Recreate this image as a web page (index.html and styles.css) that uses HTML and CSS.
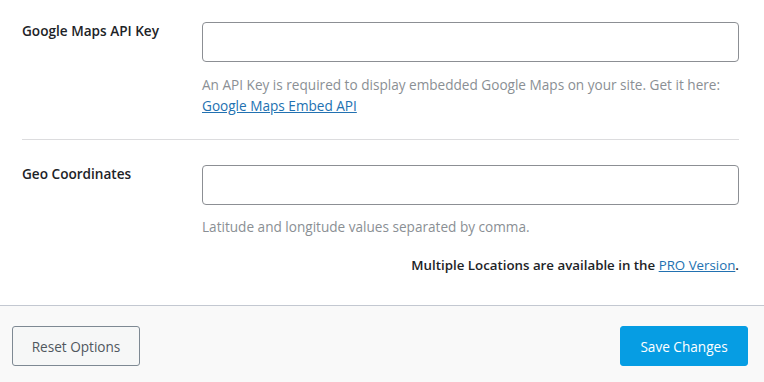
FILE: index.html
```html
<!DOCTYPE html>
<html lang="en">
<head>
<meta charset="utf-8">
<title>Settings</title>
<link rel="stylesheet" href="styles.css">
</head>
<body>
<div class="page">
  <div class="content">
    <div class="row row-first">
      <div class="label">Google Maps API Key</div>
      <div class="field">
        <input class="text-input" type="text">
        <p class="description">An API Key is required to display embedded Google Maps on your site. Get it here: <a href="#">Google Maps Embed API</a></p>
      </div>
    </div>
    <div class="row row-second">
      <div class="label">Geo Coordinates</div>
      <div class="field">
        <input class="text-input" type="text">
        <p class="description">Latitude and longitude values separated by comma.</p>
      </div>
    </div>
    <p class="pro-note">Multiple Locations are available in the <a href="#">PRO Version</a>.</p>
  </div>
  <div class="footer">
    <button class="btn btn-reset" type="button">Reset Options</button>
    <button class="btn btn-save" type="button">Save Changes</button>
  </div>
</div>
</body>
</html>
```
FILE: styles.css
```css
html, body {
  margin: 0;
  padding: 0;
  background: #ffffff;
}
body {
  font-family: "Open Sans", "Noto Sans", sans-serif;
  font-size: 13.6px;
  color: #1d2327;
  width: 764px;
  height: 382px;
  overflow: hidden;
}
.page {
  display: flex;
  flex-direction: column;
}
.content {
  padding: 0 25px 0 22px;
}
.row {
  display: flex;
}
.row-first {
  padding: 22px 0 23px;
  border-bottom: 1px solid #dcdcde;
}
.row-second {
  padding: 25px 0 0;
}
.label {
  width: 180px;
  flex: none;
  font-weight: 600;
  font-size: 13.6px;
  line-height: 20px;
  margin-top: -1px;
  color: #1d2327;
}
.field {
  flex: 1;
  min-width: 0;
}
.text-input {
  display: block;
  box-sizing: border-box;
  width: 100%;
  height: 40px;
  margin: 0;
  border: 1px solid #8c8f94;
  border-radius: 4px;
  background: #ffffff;
  font-family: inherit;
  font-size: 13.6px;
}
.description {
  margin: 12px 0 0;
  font-size: 13.6px;
  line-height: 21px;
  color: #8a8f94;
}
.row-second .description {
  margin-top: 11px;
}
a {
  color: #2271b1;
  text-decoration: underline;
}
.pro-note {
  margin: 18px 0 0;
  padding-bottom: 29px;
  text-align: right;
  font-weight: 600;
  font-size: 13.3px;
  line-height: 21px;
  color: #1d2327;
}
.pro-note a {
  font-weight: 400;
}
.footer {
  display: flex;
  justify-content: space-between;
  align-items: center;
  padding: 20px 16px 16px 12px;
  background: #f9f9f9;
  border-top: 1px solid #c3c8d1;
}
.btn {
  box-sizing: border-box;
  width: 128px;
  height: 40px;
  border-radius: 3px;
  font-family: inherit;
  font-size: 13.6px;
  cursor: pointer;
}
.btn-reset {
  background: #f6f7f7;
  border: 1px solid #7e8993;
  color: #50575e;
}
.btn-save {
  background: #069de3;
  border: 1px solid #069de3;
  color: #ffffff;
}
```
